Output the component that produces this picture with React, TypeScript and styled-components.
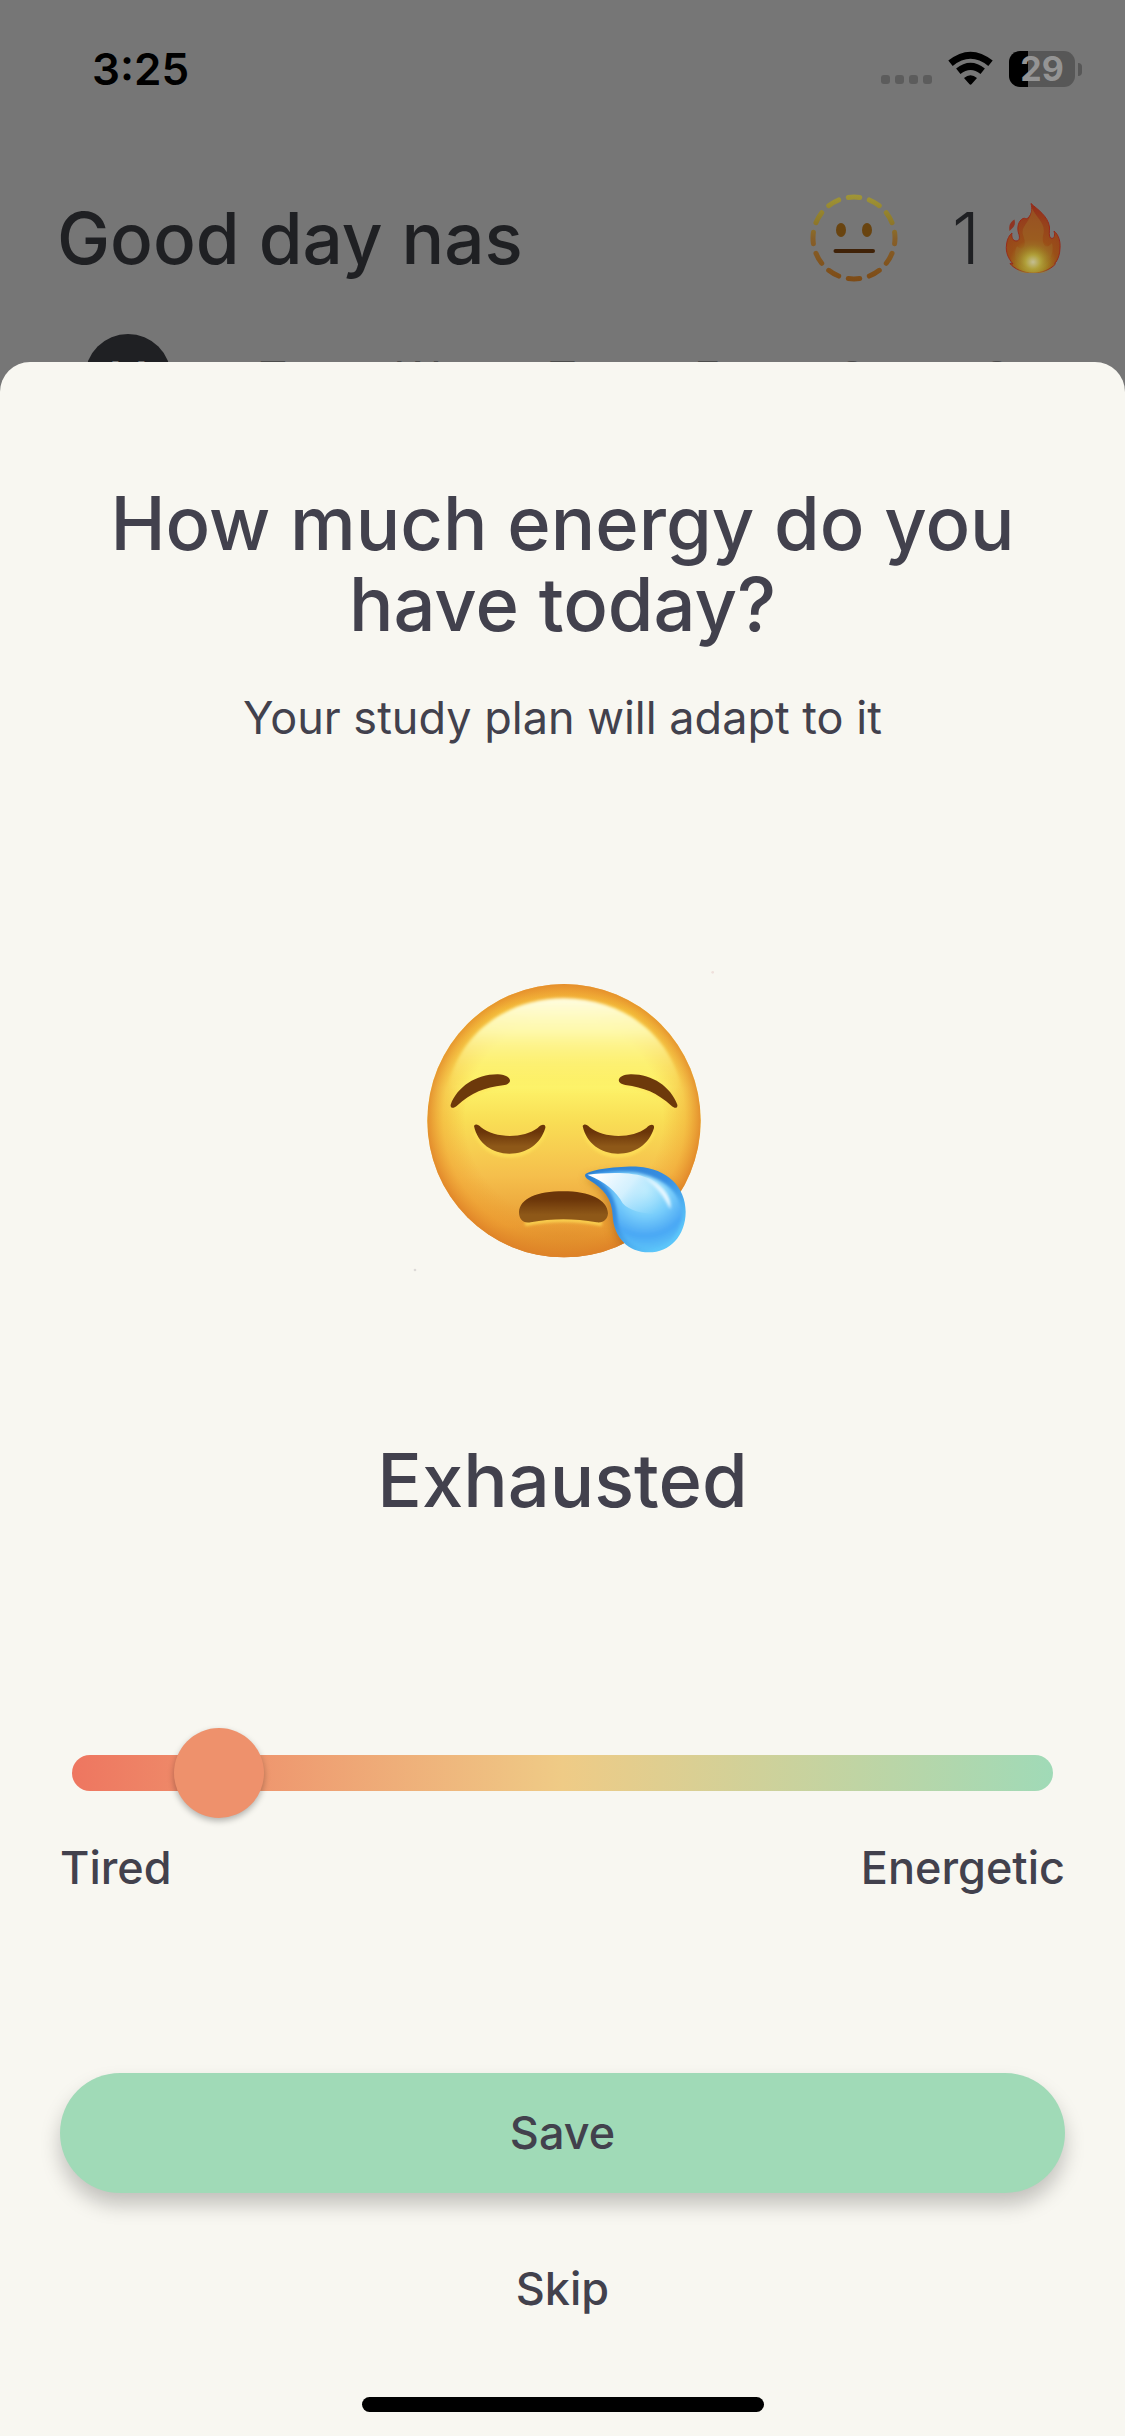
import { useState } from "react";
import styled, { createGlobalStyle } from "styled-components";

const ink = "#42414d";
const dimInk = "#1f2023";
const mint = "#a0dab7";
const paper = "#f8f7f1";

const GlobalStyle = createGlobalStyle`
  *, *::before, *::after { box-sizing: border-box; }
  body {
    margin: 0;
    background: #767676;
    font-family: Inter, "Liberation Sans", sans-serif;
    color: ${ink};
  }
  h1, h2, p { margin: 0; font-weight: 500; }
  button, input { font: inherit; color: inherit; }
`;

const Screen = styled.div`
  min-height: 100vh;
  display: flex;
  flex-direction: column;
`;

const StatusBar = styled.div`
  display: flex;
  align-items: center;
  justify-content: space-between;
  height: 138px;
  padding: 0 43px 0 92px;
  color: #000;
`;

const Clock = styled.time`
  font-size: 44px;
  line-height: 60px;
  font-weight: 600;
`;

const StatusIcons = styled.div`
  display: flex;
  align-items: center;
  gap: 16px;
`;

const Battery = styled.div`
  display: flex;
  align-items: center;
  gap: 3px;
`;

const BatteryBody = styled.div<{ $level: number }>`
  width: 66px;
  height: 36px;
  border-radius: 11px;
  background: linear-gradient(to right, #000 ${(p) => p.$level}%, #575757 ${(p) => p.$level}%);
  color: #949494;
  font-size: 34px;
  line-height: 36px;
  font-weight: 700;
  text-align: center;
`;

const BatteryTip = styled.div`
  width: 4px;
  height: 13px;
  border-radius: 0 4px 4px 0;
  background: #575757;
`;

const Header = styled.header`
  display: flex;
  align-items: center;
  justify-content: space-between;
  padding: 56px 64px 0 57px;
  color: ${dimInk};
`;

const Greeting = styled.h1`
  font-size: 71px;
  line-height: 84px;
`;

const HeaderStats = styled.div`
  display: flex;
  align-items: center;
  gap: 54px;
`;

const Streak = styled.div`
  display: flex;
  align-items: center;
  gap: 25px;
  font-size: 71px;
  line-height: 84px;
  font-weight: 300;
`;

const Week = styled.div`
  display: grid;
  grid-template-columns: repeat(7, 1fr);
  justify-items: center;
  padding: 52px 56px 0;
`;

const Day = styled.span<{ $active?: boolean }>`
  width: 86px;
  height: 86px;
  border-radius: 50%;
  background: ${(p) => (p.$active ? dimInk : "transparent")};
  color: ${(p) => (p.$active ? "#767676" : "#4c4c4c")};
  font-size: 44px;
  line-height: 86px;
  text-align: center;
`;

const Sheet = styled.main`
  position: relative;
  flex: 1;
  display: flex;
  flex-direction: column;
  align-items: center;
  margin-top: -58px;
  padding: 121px 60px 24px;
  border-radius: 30px 30px 0 0;
  background: ${paper};
`;

const Title = styled.h2`
  font-size: 74px;
  line-height: 81px;
  text-align: center;
`;

const Subtitle = styled.p`
  margin-top: 43px;
  font-size: 45px;
  line-height: 60px;
  font-weight: 400;
  text-align: center;
`;

const FaceFrame = styled.div`
  margin-top: 202px;
  display: flex;
`;

const Mood = styled.output`
  margin-top: 150px;
  font-size: 74px;
  line-height: 81px;
  font-weight: 500;
`;

const SliderBlock = styled.div`
  align-self: stretch;
  margin-top: 207px;
`;

const SliderRow = styled.div`
  display: flex;
  padding: 0 12px;
`;

const Slider = styled.input`
  appearance: none;
  flex: 1;
  min-width: 0;
  height: 90px;
  margin: 0;
  background: transparent;

  &::-webkit-slider-runnable-track {
    height: 36px;
    border-radius: 18px;
    background: linear-gradient(to right, #ee7660, #efcb86 50%, ${mint});
  }

  &::-webkit-slider-thumb {
    appearance: none;
    width: 90px;
    height: 90px;
    margin-top: -27px;
    border-radius: 50%;
    background: #ee916c;
    box-shadow: 0 3px 6px rgba(0, 0, 0, 0.28);
  }
`;

const SliderLabels = styled.div`
  display: flex;
  justify-content: space-between;
  margin-top: 20px;
  font-size: 45px;
  line-height: 60px;
  font-weight: 500;
`;

const SaveButton = styled.button`
  align-self: stretch;
  height: 120px;
  margin-top: 175px;
  border: 0;
  border-radius: 60px;
  background: ${mint};
  box-shadow: 0 12px 20px rgba(0, 0, 0, 0.22);
  font-size: 45px;
  line-height: 60px;
  font-weight: 500;
`;

const SkipButton = styled.button`
  margin-top: 66px;
  padding: 0 24px;
  border: 0;
  background: transparent;
  font-size: 45px;
  line-height: 60px;
  font-weight: 500;
`;

const HomeIndicator = styled.div`
  width: 402px;
  max-width: 60%;
  height: 15px;
  margin-top: 78px;
  border-radius: 8px;
  background: #000;
`;

function SignalDots() {
  return (
    <svg width="51" height="36" viewBox="0 0 51 36" fill="#5c5c5c" aria-hidden="true">
      {[0, 14, 28, 42].map((x) => (
        <rect key={x} x={x} y="24" width="9" height="9" rx="3" />
      ))}
    </svg>
  );
}

function WifiIcon() {
  return (
    <svg width="45" height="36" viewBox="0 0 45 36" aria-hidden="true">
      <g fill="none" stroke="#000" strokeWidth="7">
        <path d="M2.5 12.3 Q22.5 -3.8 42.5 12.3" />
        <path d="M10.3 20.3 Q22.5 10.6 34.7 20.3" />
      </g>
      <path d="M16 27 Q22.5 21.5 29 27 L23.7 33 Q22.5 34.4 21.3 33 Z" fill="#000" />
    </svg>
  );
}

function NeutralFace() {
  return (
    <svg width="88" height="88" viewBox="0 0 88 88" fill="none" role="img" aria-label="Neutral mood">
      <defs>
        <linearGradient id="ring" x1="88" y1="0" x2="0" y2="0" gradientUnits="userSpaceOnUse">
          <stop offset="0" stopColor="#a09637" />
          <stop offset="0.3" stopColor="#8f7b2a" />
          <stop offset="0.5" stopColor="#87602a" />
          <stop offset="1" stopColor="#7d4b16" />
        </linearGradient>
      </defs>
      <circle
        cx="44" cy="44" r="41" stroke="url(#ring)" strokeWidth="5" strokeLinecap="round"
        pathLength="120" strokeDasharray="5.400 4.600" strokeDashoffset="2.7" transform="rotate(-90 44 44)"
      />
      <ellipse cx="31" cy="36" rx="5" ry="7" fill="#694410" />
      <ellipse cx="57" cy="36" rx="5" ry="7" fill="#694410" />
      <path d="M25.5 57 H63" stroke="#402208" strokeWidth="4" strokeLinecap="round" />
    </svg>
  );
}

function Flame() {
  return (
    <svg width="56" height="70" viewBox="0 0 56 70" role="img" aria-label="day streak">
      <defs>
        <radialGradient id="flameBody" cx="28" cy="60" r="56" gradientUnits="userSpaceOnUse">
          <stop offset="0" stopColor="#b0a250" />
          <stop offset="0.2" stopColor="#a08424" />
          <stop offset="0.42" stopColor="#9a4f18" />
          <stop offset="0.75" stopColor="#96401c" />
          <stop offset="1" stopColor="#94301a" />
        </radialGradient>
        <radialGradient id="flameHeart">
          <stop offset="0" stopColor="#c4be92" />
          <stop offset="0.4" stopColor="#b0a03a" />
          <stop offset="1" stopColor="#9c7a1c" stopOpacity="0" />
        </radialGradient>
      </defs>
      <path
        d="M26 0.5 C32 6 43 13 44.500 24 C44.700 28 43.500 33 45.500 35 C50 37 50 31 49 28 C54 32 55.500 39 55 45 C54.800 51 53.500 55 51 59 L49.500 60 L50.500 61 C45 67 36 70 28 70 C19 70 9 66 5 60.500 L8 61 C3 55 0.500 49 1.500 42 C2 36 4.500 32 7 30 C6 34 8 38 11 38 C15 38 15 34 13.500 30 C12 25 13 18 18 15.500 C20 14.500 21.500 17 23 15 C27 11 27.500 6 26 0.500 Z"
        fill="url(#flameBody)" stroke="#972b1a" strokeWidth="1"
      />
      <path
        d="M27 5 C31 15 42 20 38 33 C37 40 40 48 47 40 C50 50 44 64 28 66 C11 65 7 53 12 43 C18 49 22 42 18 32 C15 23 26 20 27 5 Z"
        fill="#9c6a28" opacity="0.5"
      />
      <ellipse cx="28" cy="59" rx="19" ry="18" fill="url(#flameHeart)" />
      <path d="M9.500 16.500 C10.500 21 9.500 23 7.500 25 L4.500 28 C3.500 23 5 19 9.500 16.500 Z" fill="#8f3422" />
    </svg>
  );
}

function SleepyFace() {
  return (
    <svg width="330" height="340" viewBox="-6 0 990 1020" role="img" aria-label="Exhausted face">
      <defs>
        <linearGradient id="skin" x1="0" y1="100" x2="0" y2="924" gradientUnits="userSpaceOnUse">
          <stop offset="0" stopColor="#f0a83a" />
          <stop offset="0.1" stopColor="#fbdf45" />
          <stop offset="0.38" stopColor="#fdf268" />
          <stop offset="0.5" stopColor="#f9de55" />
          <stop offset="0.7" stopColor="#f5bf4c" />
          <stop offset="0.88" stopColor="#e99d35" />
          <stop offset="1" stopColor="#ca7423" />
        </linearGradient>
        <radialGradient id="rim" cx="492" cy="505" r="412" gradientUnits="userSpaceOnUse">
          <stop offset="0.72" stopColor="#ee9a2d" stopOpacity="0" />
          <stop offset="0.88" stopColor="#ee9a2d" stopOpacity="0.4" />
          <stop offset="1" stopColor="#e08428" stopOpacity="0.9" />
        </radialGradient>
        <linearGradient id="shine" x1="0" y1="145" x2="0" y2="430" gradientUnits="userSpaceOnUse">
          <stop offset="0" stopColor="#fffde0" />
          <stop offset="0.35" stopColor="#fefbb4" stopOpacity="0.9" />
          <stop offset="1" stopColor="#fdf36a" stopOpacity="0" />
        </linearGradient>
        <linearGradient id="lid" x1="0" y1="0" x2="0" y2="1">
          <stop offset="0.25" stopColor="#6b3509" />
          <stop offset="0.75" stopColor="#8e5818" />
        </linearGradient>
        <radialGradient id="drop" cx="735" cy="720" r="195" gradientUnits="userSpaceOnUse">
          <stop offset="0" stopColor="#b9ecfd" />
          <stop offset="0.4" stopColor="#79cefb" />
          <stop offset="0.7" stopColor="#4aa7f4" />
          <stop offset="1" stopColor="#61ccfa" />
        </radialGradient>
        <linearGradient id="dropEdge" x1="560" y1="660" x2="760" y2="905" gradientUnits="userSpaceOnUse">
          <stop offset="0" stopColor="#2b7fd0" />
          <stop offset="0.55" stopColor="#388fe2" />
          <stop offset="1" stopColor="#5cc6fa" />
        </linearGradient>
        <linearGradient id="dropShine" x1="600" y1="670" x2="760" y2="800" gradientUnits="userSpaceOnUse">
          <stop offset="0" stopColor="#fff" />
          <stop offset="0.45" stopColor="#dbf3fe" stopOpacity="0.9" />
          <stop offset="1" stopColor="#9edffd" stopOpacity="0" />
        </linearGradient>
        <filter id="soft" x="-20%" y="-20%" width="140%" height="140%">
          <feGaussianBlur stdDeviation="5" />
        </filter>
        <filter id="softer" x="-30%" y="-30%" width="160%" height="160%">
          <feGaussianBlur stdDeviation="12" />
        </filter>
        <clipPath id="head">
          <circle cx="492" cy="512" r="410" />
        </clipPath>
      </defs>
      <circle cx="938" cy="67" r="4" fill="#efe0dc" />
      <circle cx="45" cy="960" r="4" fill="#dddad8" />
      <circle cx="492" cy="512" r="410" fill="url(#skin)" />
      <circle cx="492" cy="512" r="410" fill="url(#rim)" />
      <path
        d="M150 390 C190 240 330 145 492 145 C655 145 795 240 838 390 C850 450 750 470 492 470 C235 470 135 450 150 390 Z"
        fill="url(#shine)" filter="url(#soft)"
      />
      <g clipPath="url(#head)">
        <path
          d="M552 685 C590 700 615 735 625 785 C635 840 650 880 690 910 L850 880 L840 740 C800 660 650 650 552 685 Z"
          fill="#a45c17" opacity="0.5" filter="url(#softer)"
        />
      </g>
      <g fill="none" stroke="#ffe45a" strokeWidth="12" opacity="0.75" filter="url(#soft)">
        <path d="M160 474 C210 430 260 408 318 402" />
        <path d="M826 474 C776 430 726 408 668 402" />
        <path d="M226 545 C260 640 395 640 434 545" />
        <path d="M552 545 C586 640 720 640 760 545" />
        <path d="M375 822 C450 806 530 806 606 822" />
      </g>
      <g fill="#6d390b">
        <path d="M152 464 C172 410 230 372 294 373 C338 375 340 403 309 406 C254 412 215 428 170 468 C160 477 150 474 152 464 Z" />
        <path d="M832 464 C812 410 756 372 692 373 C648 375 648 401 676 405 C731 412 771 428 815 468 C825 477 834 474 832 464 Z" />
      </g>
      <g fill="url(#lid)">
        <path d="M222 528 C226 521 234 522 243 532 C285 566 371 566 413 534 C425 521 438 522 436 534 C421 583 380 611 328 611 C278 611 233 581 222 528 Z" />
        <path d="M548 528 C552 521 560 522 569 532 C611 566 697 566 739 534 C751 521 764 522 762 534 C747 583 706 611 654 611 C604 611 559 581 548 528 Z" />
        <path d="M357 786 C360 746 410 724 490 724 C568 724 622 748 624 790 C623 808 611 819 590 817 C522 805 457 805 392 817 C368 821 357 807 357 786 Z" />
      </g>
      <path
        d="M555 675 C562 660 650 648 715 650 C800 655 857 710 857 785 C857 858 808 907 747 907 C684 907 641 861 638 797 C636 746 610 715 567 690 C560 686 555 682 555 675 Z"
        fill="url(#dropEdge)"
      />
      <path
        d="M572 675 C620 662 690 662 728 672 C796 690 842 730 846 790 C845 852 802 897 747 897 C695 897 655 860 652 798 C648 735 615 700 572 675 Z"
        fill="url(#drop)" filter="url(#soft)"
      />
      <path
        d="M562 674 C620 668 700 664 745 685 C798 710 825 748 816 780 C790 795 705 800 668 760 C650 725 615 694 562 674 Z"
        fill="url(#dropShine)"
      />
      <path d="M735 684 C785 700 818 740 811 778 C795 745 775 714 735 684 Z" fill="#e8f8ff" filter="url(#soft)" />
    </svg>
  );
}

const days = ["M", "T", "W", "T", "F", "S", "S"];

export default function App() {
  const [energy, setEnergy] = useState(4);

  return (
    <>
      <GlobalStyle />
      <Screen>
        <StatusBar>
          <Clock>3:25</Clock>
          <StatusIcons>
            <SignalDots />
            <WifiIcon />
            <Battery>
              <BatteryBody $level={29}>29</BatteryBody>
              <BatteryTip />
            </Battery>
          </StatusIcons>
        </StatusBar>
        <Header>
          <Greeting>Good day nas</Greeting>
          <HeaderStats>
            <NeutralFace />
            <Streak>
              1 <Flame />
            </Streak>
          </HeaderStats>
        </Header>
        <Week>
          {days.map((day, i) => (
            <Day key={i} $active={i === 0}>{day}</Day>
          ))}
        </Week>
        <Sheet>
          <Title>How much energy do you have today?</Title>
          <Subtitle>Your study plan will adapt to it</Subtitle>
          <FaceFrame>
            <SleepyFace />
          </FaceFrame>
          <Mood htmlFor="energy">Exhausted</Mood>
          <SliderBlock>
            <SliderRow>
              <Slider
                id="energy"
                type="range"
                min={0}
                max={35}
                value={energy}
                aria-label="Energy level"
                onChange={(e) => setEnergy(Number(e.target.value))}
              />
            </SliderRow>
            <SliderLabels>
              <span>Tired</span>
              <span>Energetic</span>
            </SliderLabels>
          </SliderBlock>
          <SaveButton type="button">Save</SaveButton>
          <SkipButton type="button">Skip</SkipButton>
          <HomeIndicator />
        </Sheet>
      </Screen>
    </>
  );
}
